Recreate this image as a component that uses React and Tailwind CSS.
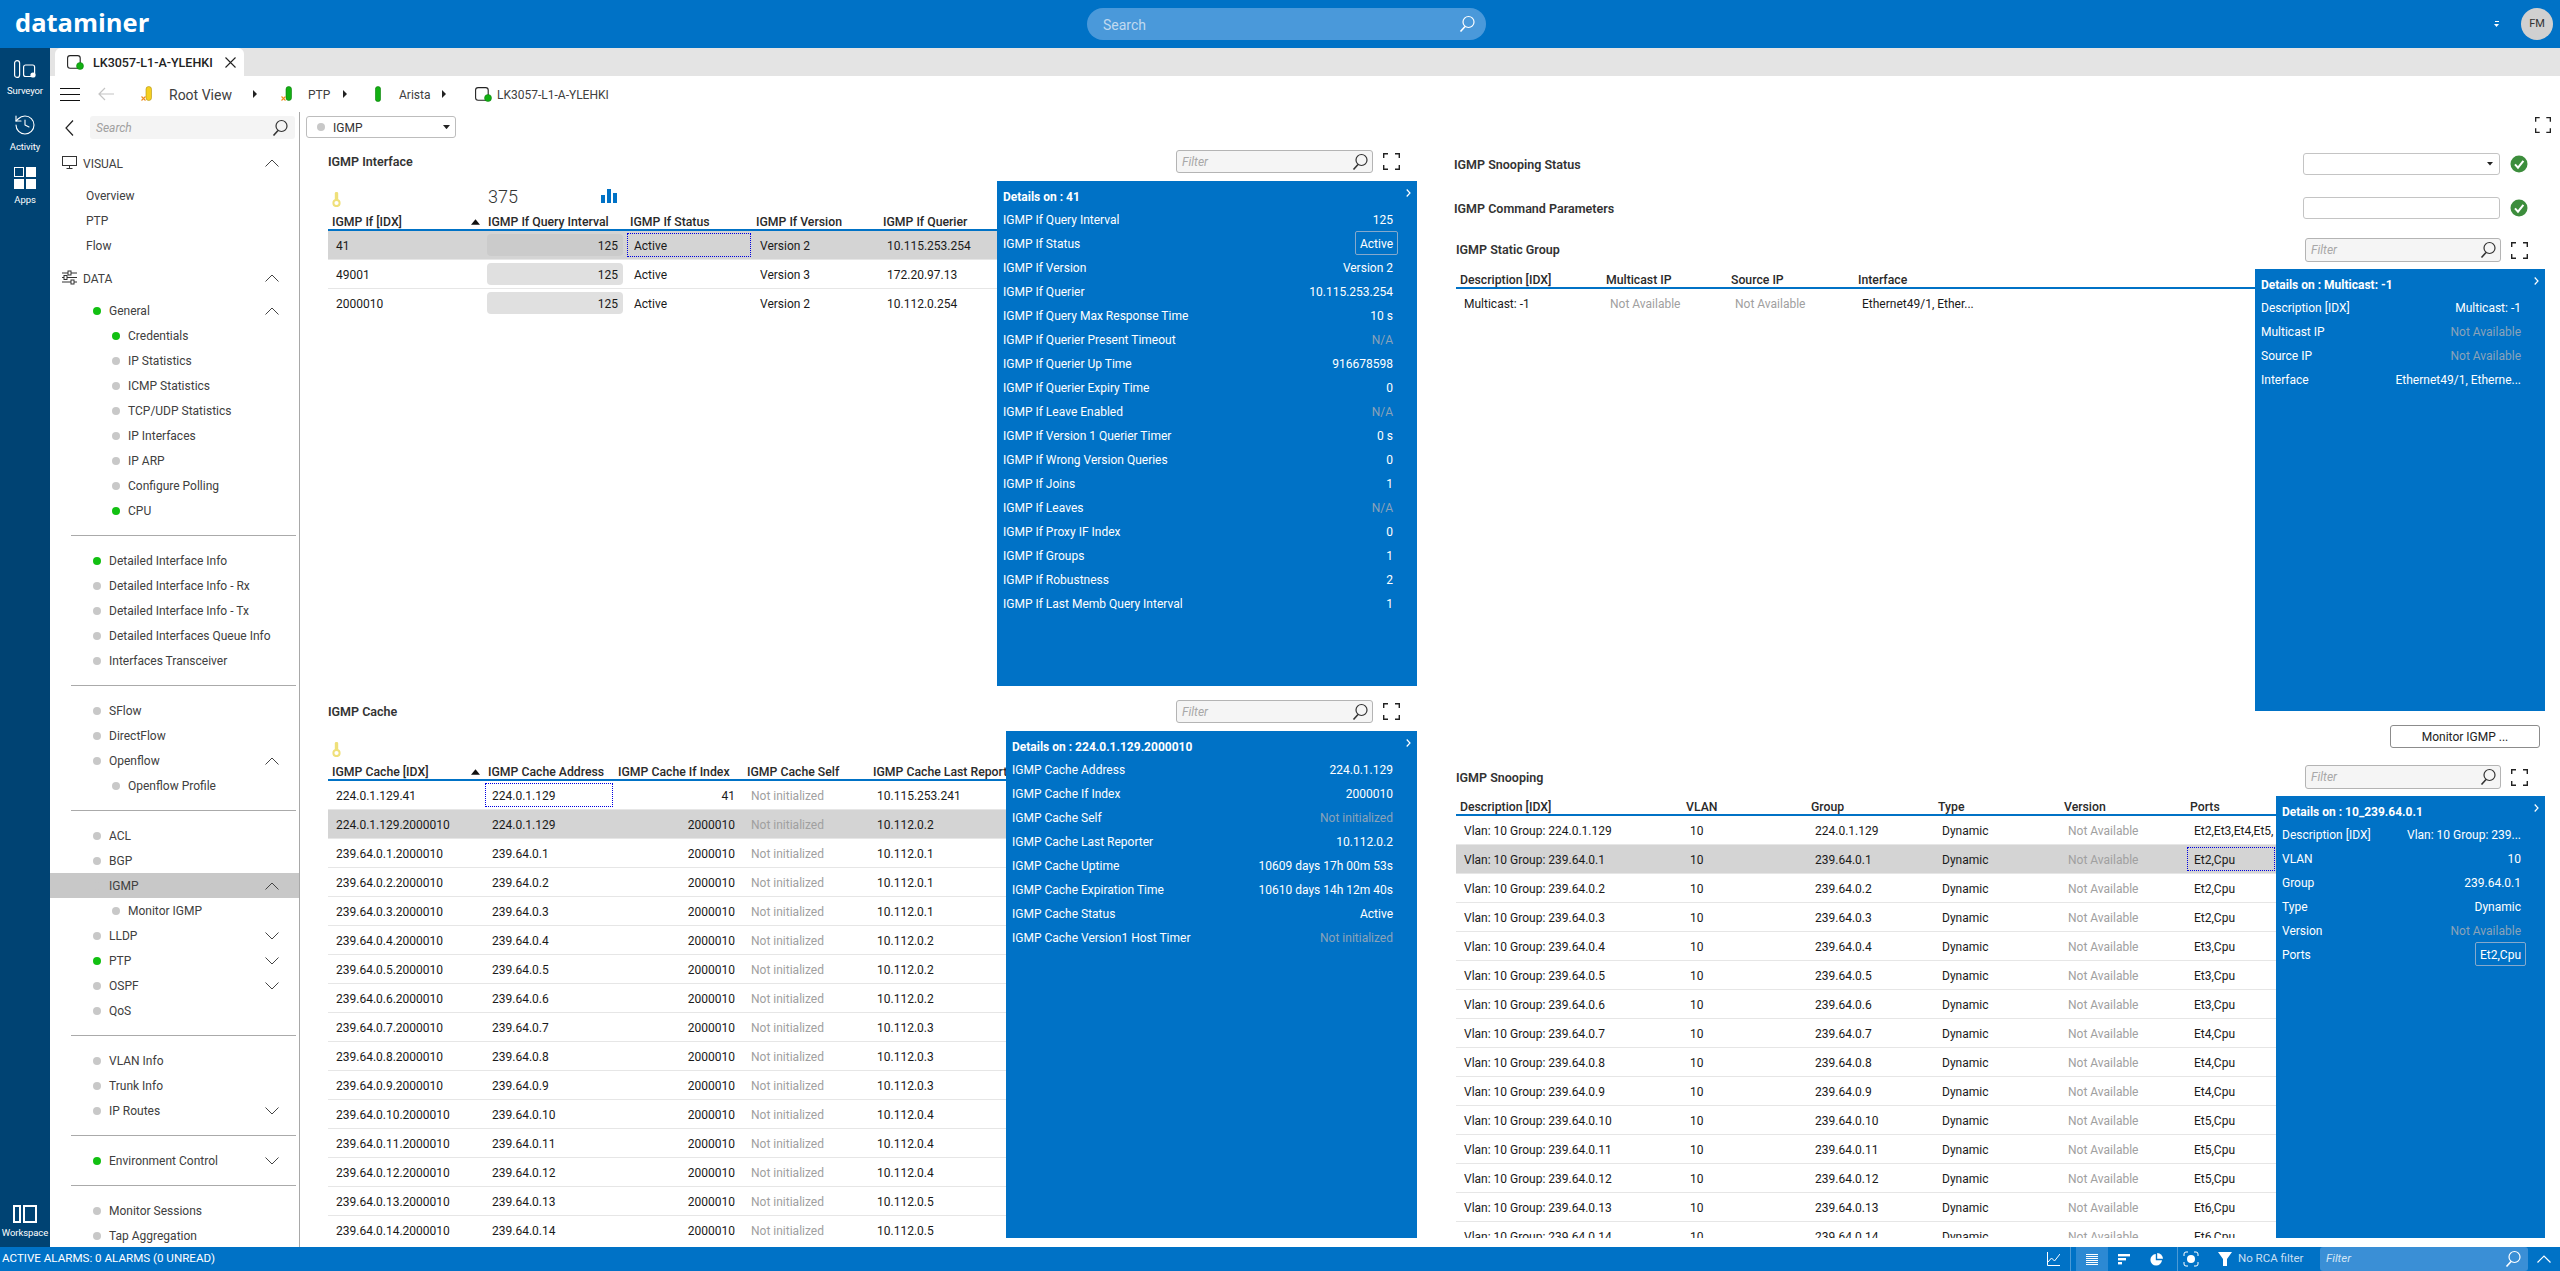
import React from "react";
import { History } from "lucide-react";

const Chevron = ({ up }) => (
  <svg width="14" height="8" viewBox="0 0 14 8" fill="none" stroke="#444" strokeWidth="1">
    <polyline points={up ? "0.5,7.5 7,1 13.5,7.5" : "0.5,0.5 7,7 13.5,0.5"} />
  </svg>
);

const Mag = ({ color = "#333", size = 18 }) => (
  <svg width={size} height={size} viewBox="0 0 18 18" fill="none" stroke={color} strokeWidth="1.2">
    <circle cx="10.5" cy="7" r="5.5" />
    <line x1="7" y1="11.5" x2="2.5" y2="16.5" strokeWidth="1.6" />
  </svg>
);

const Fullscreen = ({ size = 17 }) => (
  <svg width={size} height={size} viewBox="0 0 17 17" fill="none" stroke="#222" strokeWidth="1.4">
    <path d="M0.7 5V0.7H5M12 0.7h4.3V5M16.3 12v4.3H12M5 16.3H0.7V12" />
  </svg>
);

const Caret = ({ w = 8, color = "#222" }) => (
  <svg width={w} height={w * 0.6} viewBox="0 0 10 6"><path d="M0 0h10L5 6z" fill={color} /></svg>
);

const CaretRight = () => (
  <svg width="4" height="8" viewBox="0 0 4 8" className="shrink-0"><path d="M0 0l4 4-4 4z" fill="#222" /></svg>
);

const DeviceIcon = () => (
  <svg width="17" height="15" viewBox="0 0 17 15" fill="none" className="shrink-0">
    <rect x="0.6" y="0.6" width="12.6" height="12.6" rx="2.5" stroke="#222" strokeWidth="1.1" />
    <circle cx="13" cy="11" r="3.5" fill="#12b012" stroke="#0a7a0a" strokeWidth="0.5" />
  </svg>
);

const Pill = ({ color, border, cross }) => (
  <svg width="11" height="16" viewBox="0 0 11 16" className="shrink-0">
    <rect x="5" y="0.5" width="5.5" height="14" rx="2.7" fill={color} stroke={border} strokeWidth="0.6" />
    {cross && <path d="M0.5 10.5l4 4M4.5 10.5l-4 4" stroke="#f08c1e" strokeWidth="1.1" />}
  </svg>
);

const KeyIcon = () => (
  <svg width="9" height="15" viewBox="0 0 9 15" fill="none">
    <rect x="2.8" y="0" width="3.4" height="9" rx="1.4" fill="#efe07a" />
    <circle cx="4.5" cy="11" r="3.1" stroke="#efe07a" strokeWidth="2" />
  </svg>
);

const Bars = () => (
  <svg width="16" height="14" viewBox="0 0 16 14" fill="#0072c6">
    <rect x="0" y="6" width="4" height="8" /><rect x="6" y="0" width="4" height="14" /><rect x="12" y="4" width="4" height="10" />
  </svg>
);

const Check = () => (
  <svg width="18" height="18" viewBox="0 0 18 18" className="shrink-0">
    <circle cx="9" cy="9" r="8.5" fill="#3c8d3c" />
    <path d="M5 9.3l3 3.4 5.4-6.8" fill="none" stroke="#fff" strokeWidth="2" />
  </svg>
);

function RailItem({ icon, label, className = "" }) {
  return (
    <div className={"flex flex-col items-center text-white text-[9.5px] leading-[12px] tracking-[-0.1px] whitespace-nowrap " + className}>
      {icon}
      <div>{label}</div>
    </div>
  );
}

function Rail() {
  return (
    <div className="w-[50px] shrink-0 bg-[#004373] flex flex-col items-center pt-3 pb-2">
      <RailItem
        label={<div className="mt-[7px]">Surveyor</div>}
        icon={
          <svg width="22" height="18" viewBox="0 0 22 18" fill="none" stroke="#fff" strokeWidth="1.2">
            <rect x="0.6" y="0.6" width="5" height="16.8" rx="2.5" />
            <rect x="9.6" y="5" width="11" height="11.5" rx="2" />
            <circle cx="19" cy="15" r="2.6" fill="#fff" stroke="none" />
          </svg>
        }
      />
      <RailItem
        className="mt-4"
        label={<div className="mt-1">Activity</div>}
        icon={<History size={24} strokeWidth={1.1} color="#fff" />}
      />
      <RailItem
        className="mt-[14px]"
        label={<div className="mt-[5px]">Apps</div>}
        icon={
          <div className="grid grid-cols-[10px_10px] grid-rows-[10px_10px] gap-[2px]">
            <div className="border border-white" />
            <div className="bg-white" />
            <div className="bg-white" />
            <div className="bg-white" />
          </div>
        }
      />
      <RailItem
        className="mt-auto"
        label={<div className="mt-1">Workspace</div>}
        icon={
          <div className="flex gap-[2px] h-[18px]">
            <div className="w-[8px] border-2 border-white" />
            <div className="w-[14px] border-2 border-white" />
          </div>
        }
      />
    </div>
  );
}

function Dot({ green }) {
  return <div className={"w-2 h-2 rounded-full shrink-0 " + (green ? "bg-[#12c012]" : "bg-[#c8c8c8]")} />;
}

function Item({ label, green, nested, chev, active }) {
  return (
    <div className={"h-[25px] flex items-center pr-5 " + (nested ? "pl-[62px] " : "pl-[43px] ") + (active ? "bg-[#c8c8c8]" : "")}>
      <Dot green={green} />
      <div className="ml-2 flex-1 whitespace-nowrap">{label}</div>
      {chev && <Chevron up={chev === "up"} />}
    </div>
  );
}

const Divider = () => <div className="my-3 ml-[21px] mr-[3px] h-px bg-[#aaaaaa]" />;

function Sidebar() {
  return (
    <div className="w-[250px] shrink-0 border-r border-[#a8a8a8] overflow-hidden text-[12px] text-[#404040] pt-1">
      <div className="flex items-center h-[23px] pl-[15px]">
        <svg width="9" height="16" viewBox="0 0 9 16" fill="none" stroke="#222" strokeWidth="1.2"><polyline points="8,0.5 1,8 8,15.5" /></svg>
        <div className="ml-[16px] w-[205px] h-[23px] bg-[#f4f4f4] rounded-[3px] flex items-center justify-between px-[6px] italic text-[#a0a0a0]">
          <span>Search</span>
          <Mag />
        </div>
      </div>
      <div className="mt-[11px] h-[25px] flex items-center pl-3 pr-5">
        <svg width="15" height="13" viewBox="0 0 15 13" fill="none" stroke="#333" strokeWidth="1"><rect x="0.5" y="0.5" width="14" height="9" /><path d="M7.5 9.5v3M4.5 12.5h6" /></svg>
        <div className="ml-[6px] pt-[2px] flex-1 text-[12px]">VISUAL</div>
        <Chevron up />
      </div>
      <div className="mt-2 pl-9">
        <div className="h-[25px] flex items-center">Overview</div>
        <div className="h-[25px] flex items-center">PTP</div>
        <div className="h-[25px] flex items-center">Flow</div>
      </div>
      <div className="mt-[7px] h-[25px] flex items-center pl-3 pr-5">
        <svg width="15" height="15" viewBox="0 0 15 15" fill="none" stroke="#333" strokeWidth="1"><path d="M0 3h6M9 3h6M0 7.5h2M5 7.5h10M0 12h9M12 12h3" /><rect x="6" y="1" width="3" height="4" /><rect x="2" y="5.5" width="3" height="4" /><rect x="9" y="10" width="3" height="4" /></svg>
        <div className="ml-[6px] pt-[2px] flex-1 text-[12px]">DATA</div>
        <Chevron up />
      </div>
      <div className="mt-2">
        <Item label="General" green chev="up" />
        <Item label="Credentials" green nested />
        <Item label="IP Statistics" nested />
        <Item label="ICMP Statistics" nested />
        <Item label="TCP/UDP Statistics" nested />
        <Item label="IP Interfaces" nested />
        <Item label="IP ARP" nested />
        <Item label="Configure Polling" nested />
        <Item label="CPU" green nested />
      </div>
      <Divider />
      <Item label="Detailed Interface Info" green />
      <Item label="Detailed Interface Info - Rx" />
      <Item label="Detailed Interface Info - Tx" />
      <Item label="Detailed Interfaces Queue Info" />
      <Item label="Interfaces Transceiver" />
      <Divider />
      <Item label="SFlow" />
      <Item label="DirectFlow" />
      <Item label="Openflow" chev="up" />
      <Item label="Openflow Profile" nested />
      <Divider />
      <Item label="ACL" />
      <Item label="BGP" />
      <Item label="IGMP" chev="up" active />
      <Item label="Monitor IGMP" nested />
      <Item label="LLDP" chev="down" />
      <Item label="PTP" green chev="down" />
      <Item label="OSPF" chev="down" />
      <Item label="QoS" />
      <Divider />
      <Item label="VLAN Info" />
      <Item label="Trunk Info" />
      <Item label="IP Routes" chev="down" />
      <Divider />
      <Item label="Environment Control" green chev="down" />
      <Divider />
      <Item label="Monitor Sessions" />
      <Item label="Tap Aggregation" />
    </div>
  );
}

function Filter({ w = "w-[196px]", h = "h-[24px]" }) {
  return (
    <div className={w + " " + h + " bg-[#f5f5f5] border border-[#b4b4b4] rounded-[3px] flex items-center justify-between pl-[5px] pr-[3px] italic text-[12px] text-[#a8a8a8]"}>
      <span>Filter</span>
      <Mag />
    </div>
  );
}

function Details({ title, rows, className }) {
  return (
    <div className={"shrink-0 bg-[#0072c6] text-white text-[12px] pl-[6px] pt-1 " + className}>
      <div className="h-[22px] flex items-center justify-between pr-[6px] font-bold">
        <span className="pt-[2px]">{title}</span>
        <svg width="5" height="8" viewBox="0 0 5 8" fill="none" stroke="#fff" strokeWidth="1.2" className="-mt-[6px]"><polyline points="0.7,0.5 4,4 0.7,7.5" /></svg>
      </div>
      {rows.map(([l, v, k]) => (
        <div key={l} className="h-6 flex items-center justify-between pr-6 whitespace-nowrap">
          <span className="pt-[2px]">{l}</span>
          {k === "box" ? (
            <span className="h-6 flex items-center px-1 pt-[2px] -mr-[5px] border border-[#85a9cc] rounded-[2px]">{v}</span>
          ) : (
            <span className={"pt-[2px] " + (k === "na" ? "text-[#8ba3b9]" : "")}>{v}</span>
          )}
        </div>
      ))}
    </div>
  );
}

function Table({ cols, headers, rows, selected, focus, sort, top, barCol, rightCol }) {
  return (
    <div className="flex-1 min-w-0 overflow-hidden text-[12px] text-[#1a1a1a]">
      {top}
      <div className={"grid h-[20px] pb-[1px] border-b-2 border-[#0072c6] font-medium text-[12.25px] text-[#2a2a2a] " + cols}>
        {headers.map((h, i) => (
          <div key={h} className="pl-1 pt-[2px] flex items-center justify-between whitespace-nowrap">
            <span>{h}</span>
            {sort && i === 0 && <span className="mr-1"><svg width="9" height="6" viewBox="0 0 10 6"><path d="M0 6h10L5 0z" fill="#111" /></svg></span>}
          </div>
        ))}
      </div>
      {rows.map((r, ri) => (
        <div
          key={ri}
          className={
            "grid h-[29px] border-b " +
            (ri === rows.length - 1 ? "border-transparent " : "border-[#e6e6e6] ") +
            cols +
            (ri === selected ? " bg-[#d4d4d4]" : "")
          }
        >
          {r.map((c, ci) => {
            const gray = c === "Not initialized" || c === "Not Available";
            if (ci === barCol) {
              return (
                <div key={ci} className={"m-[3px] pt-[2px] rounded-[4px] flex items-center justify-end pr-[5px] " + (ri === selected ? "bg-[#cbcbcb]" : "bg-[#e0e0e0]")}>{c}</div>
              );
            }
            const isFocus = focus && focus[0] === ri && focus[1] === ci;
            return (
              <div
                key={ci}
                className={
                  "mx-px my-0.5 px-[6px] pt-[2px] border flex items-center whitespace-nowrap overflow-hidden " +
                  (isFocus ? "border-dotted border-[#0000e0] " : "border-transparent ") +
                  (gray ? "text-[#a0a0a0] " : "") +
                  (ci === rightCol ? "justify-end" : "")
                }
              >
                {c}
              </div>
            );
          })}
        </div>
      ))}
    </div>
  );
}

const ifaceDetails = [
  ["IGMP If Query Interval", "125"],
  ["IGMP If Status", "Active", "box"],
  ["IGMP If Version", "Version 2"],
  ["IGMP If Querier", "10.115.253.254"],
  ["IGMP If Query Max Response Time", "10 s"],
  ["IGMP If Querier Present Timeout", "N/A", "na"],
  ["IGMP If Querier Up Time", "916678598"],
  ["IGMP If Querier Expiry Time", "0"],
  ["IGMP If Leave Enabled", "N/A", "na"],
  ["IGMP If Version 1 Querier Timer", "0 s"],
  ["IGMP If Wrong Version Queries", "0"],
  ["IGMP If Joins", "1"],
  ["IGMP If Leaves", "N/A", "na"],
  ["IGMP If Proxy IF Index", "0"],
  ["IGMP If Groups", "1"],
  ["IGMP If Robustness", "2"],
  ["IGMP If Last Memb Query Interval", "1"],
];

const cacheDetails = [
  ["IGMP Cache Address", "224.0.1.129"],
  ["IGMP Cache If Index", "2000010"],
  ["IGMP Cache Self", "Not initialized", "na"],
  ["IGMP Cache Last Reporter", "10.112.0.2"],
  ["IGMP Cache Uptime", "10609 days 17h 00m 53s"],
  ["IGMP Cache Expiration Time", "10610 days 14h 12m 40s"],
  ["IGMP Cache Status", "Active"],
  ["IGMP Cache Version1 Host Timer", "Not initialized", "na"],
];

const reporter = [1, 1, 1, 2, 2, 2, 3, 3, 3, 4, 4, 4, 5, 5];
const cacheRows = [
  ["224.0.1.129.41", "224.0.1.129", "41", "Not initialized", "10.115.253.241"],
  ["224.0.1.129.2000010", "224.0.1.129", "2000010", "Not initialized", "10.112.0.2"],
  ...reporter.map((n, i) => [
    `239.64.0.${i + 1}.2000010`,
    `239.64.0.${i + 1}`,
    "2000010",
    "Not initialized",
    `10.112.0.${n}`,
  ]),
];

const ports = [2, 2, 2, 3, 3, 3, 4, 4, 4, 5, 5, 5, 6, 6];
const snoopRows = [
  ["Vlan: 10 Group: 224.0.1.129", "10", "224.0.1.129", "Dynamic", "Not Available", "Et2,Et3,Et4,Et5,Et6,Cpu"],
  ...ports.map((n, i) => [
    `Vlan: 10 Group: 239.64.0.${i + 1}`,
    "10",
    `239.64.0.${i + 1}`,
    "Dynamic",
    "Not Available",
    `Et${n},Cpu`,
  ]),
];

const ifaceCols = "grid-cols-[156px_142px_126px_127px_1fr]";
const cacheCols = "grid-cols-[156px_130px_129px_126px_1fr]";
const staticCols = "grid-cols-[146px_125px_127px_1fr]";
const snoopCols = "grid-cols-[226px_125px_127px_126px_126px_1fr]";

function TopRow({ query }) {
  return (
    <div className={"grid h-[30px] " + ifaceCols}>
      <div className="pl-1 pt-[11px]"><KeyIcon /></div>
      {query && (
        <div className="pl-1 pr-[9px] flex justify-between">
          <span className="text-[18px] font-light leading-[24px] pt-[4px] text-[#333]">375</span>
          <span className="pt-2"><Bars /></span>
        </div>
      )}
    </div>
  );
}

function LeftSection({ title, className, panel, table }) {
  return (
    <div className={className}>
      <div className="h-[23px] flex items-center pr-[17px]">
        <div className="flex-1 pt-[2px] font-semibold text-[12.5px] text-[#333]">{title}</div>
        <Filter w="w-[197px]" h="h-[23px]" />
        <div className="ml-[10px]"><Fullscreen /></div>
      </div>
      <div className="mt-2 flex h-[calc(100%-31px)]">
        {table}
        {panel}
      </div>
    </div>
  );
}

function Status() {
  return (
    <div className="h-6 shrink-0 bg-[#0072c6] text-white text-[11.5px] flex items-center">
      <div className="pl-[2px] text-[11.6px] whitespace-nowrap">ACTIVE ALARMS: 0 ALARMS (0 UNREAD)</div>
      <div className="ml-auto flex items-center h-6">
        <svg width="13" height="14" viewBox="0 0 13 14" fill="none" stroke="#fff" strokeWidth="1"><path d="M0.5 0v13.5H13M1 10l3.5-4 3 3L13 2" /></svg>
        <div className="ml-[10px] w-px h-6 bg-[#4c9ad6]" />
        <div className="ml-[5px] w-8 h-6 bg-[#2c89d3] flex items-center justify-center">
          <svg width="12" height="11" viewBox="0 0 12 11" stroke="#fff" strokeWidth="1"><path d="M0 .5h12M0 2.5h12M0 4.5h12M0 6.5h12M0 8.5h12M0 10.5h12" /></svg>
        </div>
        <div className="w-8 flex justify-center">
          <svg width="12" height="11" viewBox="0 0 12 11" fill="#fff"><rect width="12" height="2.4" /><rect y="4" width="8" height="2.4" /><rect y="8" width="4" height="2.4" /></svg>
        </div>
        <div className="w-8 flex justify-center">
          <svg width="13" height="13" viewBox="0 0 13 13" fill="#fff"><path d="M5.8 1A5.8 5.8 0 1 0 12 7.2H5.8z" /><path d="M7.2 0v5.8H13A5.8 5.8 0 0 0 7.2 0z" /></svg>
        </div>
        <div className="ml-[5px] w-px h-6 bg-[#4c9ad6]" />
        <div className="ml-[5px] w-4">
          <svg width="16" height="16" viewBox="0 0 16 16" fill="none" stroke="#fff" strokeWidth="1"><path d="M1 5V3a2 2 0 0 1 2-2h2M11 1h2a2 2 0 0 1 2 2v2M15 11v2a2 2 0 0 1-2 2h-2M5 15H3a2 2 0 0 1-2-2v-2" /><circle cx="8" cy="8" r="4" fill="#fff" stroke="none" /></svg>
        </div>
        <div className="ml-[19px] w-[14px]">
          <svg width="14" height="14" viewBox="0 0 14 14" fill="#fff"><path d="M0 0h14L9 7v7H5V7z" /></svg>
        </div>
        <div className="ml-[6px] w-[82px] text-[#c8dff2] whitespace-nowrap">No RCA filter</div>
        <div className="w-[208px] h-6 bg-[#3a8fd6] rounded-[3px] flex items-center justify-between pl-[6px] pr-[6px] italic text-[#d4e6f5]">
          <span>Filter</span>
          <Mag color="#fff" />
        </div>
        <div className="w-8 flex justify-center">
          <svg width="14" height="8" viewBox="0 0 14 8" fill="none" stroke="#fff" strokeWidth="1.2"><polyline points="0.5,7.5 7,1 13.5,7.5" /></svg>
        </div>
      </div>
    </div>
  );
}

export default function App() {
  return (
    <div className="w-[2560px] h-[1271px] flex flex-col overflow-hidden bg-white [font-family:Roboto,sans-serif]">
      <div className="h-12 shrink-0 bg-[#0072c6] flex items-center">
        <div className="ml-[15px] w-[1072px] text-white text-[25.5px] font-bold leading-none [font-family:'Open_Sans',sans-serif] -mt-[3px]">dataminer</div>
        <div className="w-[399px] h-8 rounded-full bg-[#4a99da] flex items-center justify-between pl-4 pr-[10px] text-[#c0daf0] text-[14px]">
          <span className="pt-[2px]">Search</span>
          <Mag color="#fff" />
        </div>
        <div className="ml-auto flex flex-col items-center gap-[2px]">
          <div className="w-[4px] h-px bg-white" />
          <Caret w={5} color="#fff" />
        </div>
        <div className="ml-[22px] mr-[7px] w-8 h-8 rounded-full bg-[#d0d0d0] text-[#333] text-[11px] flex items-center justify-center">FM</div>
      </div>
      <div className="flex-1 min-h-0 flex">
        <Rail />
        <div className="flex-1 min-w-0 flex flex-col">
          <div className="h-7 shrink-0 bg-[#e4e4e4] pl-[5px]">
            <div className="w-[189px] h-7 bg-white rounded-t-[6px] flex items-center pl-3 text-[12.5px] font-medium text-[#222]">
              <DeviceIcon />
              <span className="ml-[9px] pt-[2px] w-[118px] whitespace-nowrap">LK3057-L1-A-YLEHKI</span>
              <svg width="11" height="11" viewBox="0 0 11 11" className="ml-[14px]" stroke="#222" strokeWidth="1.1"><path d="M0.5 0.5l10 10M10.5 0.5l-10 10" /></svg>
            </div>
          </div>
          <div className="h-9 shrink-0 flex items-center text-[12px] text-[#404040]">
            <div className="ml-[10px] w-5 flex flex-col gap-[5px]">
              <div className="h-px bg-[#111]" /><div className="h-px bg-[#111]" /><div className="h-px bg-[#111]" />
            </div>
            <svg width="16" height="14" viewBox="0 0 16 14" fill="none" stroke="#c4c4c4" strokeWidth="1.2" className="ml-[18px]"><path d="M16 7H1M7 1L1 7l6 6" /></svg>
            <div className="ml-[27px] w-[11px]"><Pill color="#f5d020" border="#b09010" cross /></div>
            <div className="ml-[17px] pt-[2px] w-[84px] text-[14px]">Root View</div>
            <CaretRight />
            <div className="ml-6 w-[11px]"><Pill color="#12b012" border="#0a7a0a" cross /></div>
            <div className="ml-4 pt-[2px] w-[35px]">PTP</div>
            <CaretRight />
            <div className="ml-7 w-[6px]">
              <svg width="6" height="16" viewBox="0 0 6 16"><rect x="0.4" y="0.5" width="5.2" height="15" rx="2.6" fill="#12b012" stroke="#0a7a0a" strokeWidth="0.6" /></svg>
            </div>
            <div className="ml-[18px] pt-[2px] w-[43px]">Arista</div>
            <CaretRight />
            <div className="ml-[29px]"><DeviceIcon /></div>
            <div className="ml-[5px] pt-[2px] whitespace-nowrap">LK3057-L1-A-YLEHKI</div>
          </div>
          <div className="flex-1 min-h-0 flex">
            <Sidebar />
            <div className="flex-1 min-w-0 flex flex-col">
              <div className="h-[38px] shrink-0 flex justify-between">
                <div className="ml-[6px] mt-1 w-[150px] h-[22px] border border-[#bdbdbd] rounded-[3px] flex items-center pl-[10px] pr-[5px] text-[12px] text-[#333]">
                  <Dot />
                  <span className="ml-2 pt-[2px] flex-1">IGMP</span>
                  <Caret w={7} />
                </div>
                <div className="mt-[5px] mr-[9px]"><Fullscreen size={16} /></div>
              </div>
              <div className="flex-1 min-h-0 flex">
                <div className="w-[1117px] shrink-0 pl-7 flex flex-col">
                  <LeftSection
                    title="IGMP Interface"
                    className="h-[536px] shrink-0"
                    table={
                      <Table
                        cols={ifaceCols}
                        top={<TopRow query />}
                        sort
                        barCol={1}
                        selected={0}
                        focus={[0, 2]}
                        headers={["IGMP If [IDX]", "IGMP If Query Interval", "IGMP If Status", "IGMP If Version", "IGMP If Querier"]}
                        rows={[
                          ["41", "125", "Active", "Version 2", "10.115.253.254"],
                          ["49001", "125", "Active", "Version 3", "172.20.97.13"],
                          ["2000010", "125", "Active", "Version 2", "10.112.0.254"],
                        ]}
                      />
                    }
                    panel={<Details title="Details on : 41" rows={ifaceDetails} className="w-[420px]" />}
                  />
                  <LeftSection
                    title="IGMP Cache"
                    className="mt-[14px] h-[538px] shrink-0"
                    table={
                      <Table
                        cols={cacheCols}
                        top={<TopRow />}
                        sort
                        rightCol={2}
                        selected={1}
                        focus={[0, 1]}
                        headers={["IGMP Cache [IDX]", "IGMP Cache Address", "IGMP Cache If Index", "IGMP Cache Self", "IGMP Cache Last Report"]}
                        rows={cacheRows}
                      />
                    }
                    panel={<Details title="Details on : 224.0.1.129.2000010" rows={cacheDetails} className="w-[411px]" />}
                  />
                </div>
                <div className="ml-[37px] w-[1091px] shrink-0 flex flex-col">
                  <div className="mt-[3px] h-[22px] flex items-center pr-[17px]">
                    <div className="flex-1 pt-[2px] font-semibold text-[12.5px] text-[#333]">IGMP Snooping Status</div>
                    <div className="w-[197px] h-[22px] border border-[#c4c4c4] rounded-[3px] flex items-center justify-end pr-[6px]"><Caret w={6} /></div>
                    <div className="ml-[10px]"><Check /></div>
                  </div>
                  <div className="mt-[22px] h-[22px] flex items-center pr-[17px]">
                    <div className="flex-1 pt-[2px] font-semibold text-[12.5px] text-[#333]">IGMP Command Parameters</div>
                    <div className="w-[197px] h-[22px] border border-[#c4c4c4] rounded-[3px]" />
                    <div className="ml-[10px]"><Check /></div>
                  </div>
                  <div className="mt-[19px] h-6 flex items-center pl-[2px] pr-[17px]">
                    <div className="flex-1 font-semibold text-[12.5px] text-[#333]">IGMP Static Group</div>
                    <Filter />
                    <div className="ml-[10px]"><Fullscreen /></div>
                  </div>
                  <div className="mt-[7px] h-[442px] flex pl-[2px]">
                    <Table
                      cols={staticCols}
                      headers={["Description [IDX]", "Multicast IP", "Source IP", "Interface"]}
                      rows={[["Multicast: -1", "Not Available", "Not Available", "Ethernet49/1, Ether..."]]}
                    />
                    <Details
                      title="Details on : Multicast: -1"
                      className="w-[290px]"
                      rows={[
                        ["Description [IDX]", "Multicast: -1"],
                        ["Multicast IP", "Not Available", "na"],
                        ["Source IP", "Not Available", "na"],
                        ["Interface", "Ethernet49/1, Etherne..."],
                      ]}
                    />
                  </div>
                  <div className="mt-[14px] flex justify-end pr-[5px]">
                    <div className="w-[150px] h-[23px] border border-[#8c8c8c] rounded-[3px] flex items-center justify-center text-[12px] text-[#222]">Monitor IGMP ...</div>
                  </div>
                  <div className="mt-[17px] h-6 flex items-center pl-[2px] pr-[17px]">
                    <div className="flex-1 pt-[2px] font-semibold text-[12.5px] text-[#333]">IGMP Snooping</div>
                    <Filter />
                    <div className="ml-[10px]"><Fullscreen /></div>
                  </div>
                  <div className="mt-[7px] h-[442px] flex pl-[2px]">
                    <Table
                      cols={snoopCols}
                      selected={1}
                      focus={[1, 5]}
                      headers={["Description [IDX]", "VLAN", "Group", "Type", "Version", "Ports"]}
                      rows={snoopRows}
                    />
                    <Details
                      title="Details on : 10_239.64.0.1"
                      className="w-[269px]"
                      rows={[
                        ["Description [IDX]", "Vlan: 10 Group: 239..."],
                        ["VLAN", "10"],
                        ["Group", "239.64.0.1"],
                        ["Type", "Dynamic"],
                        ["Version", "Not Available", "na"],
                        ["Ports", "Et2,Cpu", "box"],
                      ]}
                    />
                  </div>
                </div>
              </div>
            </div>
          </div>
        </div>
      </div>
      <Status />
    </div>
  );
}
